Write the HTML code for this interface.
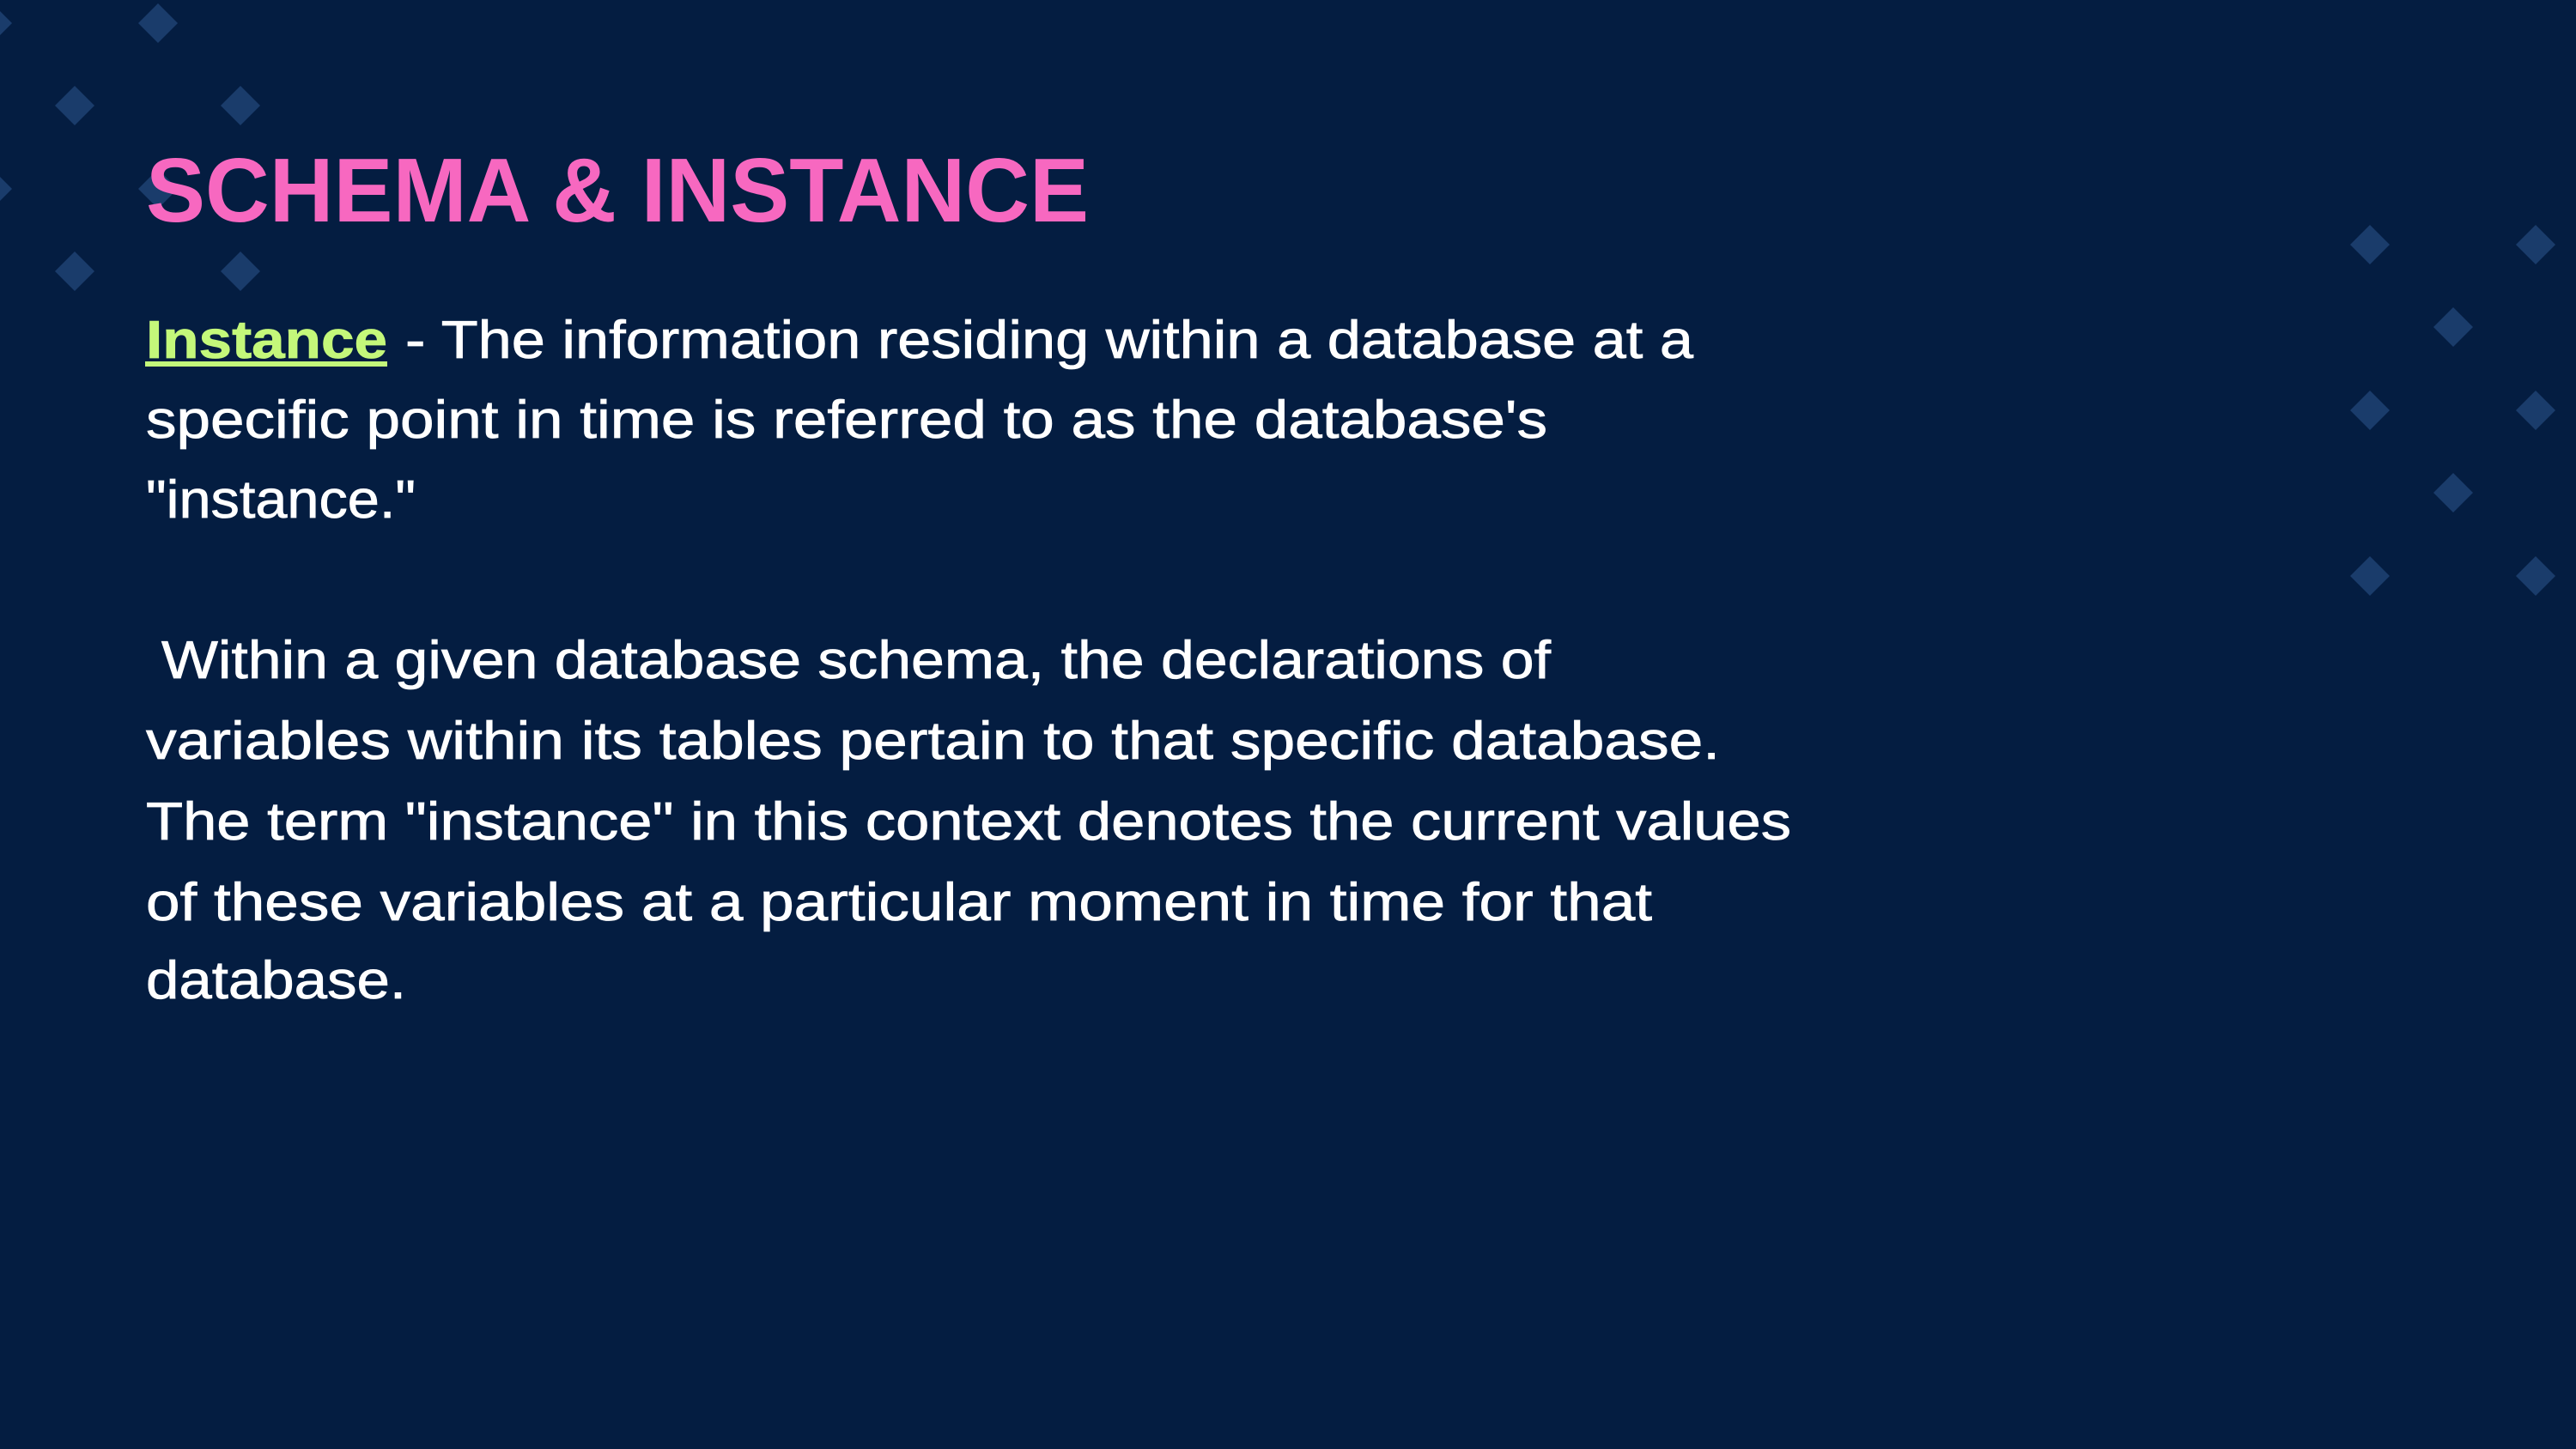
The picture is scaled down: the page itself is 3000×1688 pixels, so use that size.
<!DOCTYPE html>
<html><head><meta charset="utf-8"><style>
html,body{margin:0;padding:0;background:#041d41;}
svg{display:block}
</style></head><body>
<svg width="3000" height="1688" viewBox="0 0 3000 1688" xmlns="http://www.w3.org/2000/svg">
<rect width="3000" height="1688" fill="#041d41"/>
<g fill="#1a3c6b">
<path d="M-9 4 L14 27 L-9 50 L-32 27Z"/>
<path d="M184 4 L207 27 L184 50 L161 27Z"/>
<path d="M87 100 L110 123 L87 146 L64 123Z"/>
<path d="M280 100 L303 123 L280 146 L257 123Z"/>
<path d="M-9 197 L14 220 L-9 243 L-32 220Z"/>
<path d="M184 197 L207 220 L184 243 L161 220Z"/>
<path d="M87 293 L110 316 L87 339 L64 316Z"/>
<path d="M280 293 L303 316 L280 339 L257 316Z"/>
<path d="M2760 262 L2783 285 L2760 308 L2737 285Z"/>
<path d="M2953 262 L2976 285 L2953 308 L2930 285Z"/>
<path d="M2857 358 L2880 381 L2857 404 L2834 381Z"/>
<path d="M2760 455 L2783 478 L2760 501 L2737 478Z"/>
<path d="M2953 455 L2976 478 L2953 501 L2930 478Z"/>
<path d="M2857 551 L2880 574 L2857 597 L2834 574Z"/>
<path d="M2760 648 L2783 671 L2760 694 L2737 671Z"/>
<path d="M2953 648 L2976 671 L2953 694 L2930 671Z"/>
</g>
<text x="170" y="258" font-family="Liberation Sans, sans-serif" font-weight="bold" font-size="106" fill="#f768c0" textLength="1098" lengthAdjust="spacingAndGlyphs">SCHEMA &amp; INSTANCE</text>
<g font-family="Liberation Sans, sans-serif" font-size="62" fill="#ffffff" stroke="#ffffff" stroke-width="0.8">
<text x="170" y="417" fill="#c4f87a" stroke="#c4f87a" font-weight="bold" textLength="281" lengthAdjust="spacingAndGlyphs">Instance</text>
<rect x="169" y="421" width="282" height="6" fill="#c4f87a" stroke="none"/>
<text x="472" y="417" textLength="1500" lengthAdjust="spacingAndGlyphs">- The information residing within a database at a</text>
<text x="170" y="510" textLength="1632" lengthAdjust="spacingAndGlyphs">specific point in time is referred to as the database's</text>
<text x="170" y="603" textLength="314" lengthAdjust="spacingAndGlyphs">"instance."</text>
<text x="188" y="790" textLength="1618" lengthAdjust="spacingAndGlyphs">Within a given database schema, the declarations of</text>
<text x="170" y="884" textLength="1833" lengthAdjust="spacingAndGlyphs">variables within its tables pertain to that specific database.</text>
<text x="170" y="978" textLength="1916" lengthAdjust="spacingAndGlyphs">The term "instance" in this context denotes the current values</text>
<text x="170" y="1072" textLength="1754" lengthAdjust="spacingAndGlyphs">of these variables at a particular moment in time for that</text>
<text x="170" y="1163" textLength="303" lengthAdjust="spacingAndGlyphs">database.</text>
</g>
</svg>
</body></html>
